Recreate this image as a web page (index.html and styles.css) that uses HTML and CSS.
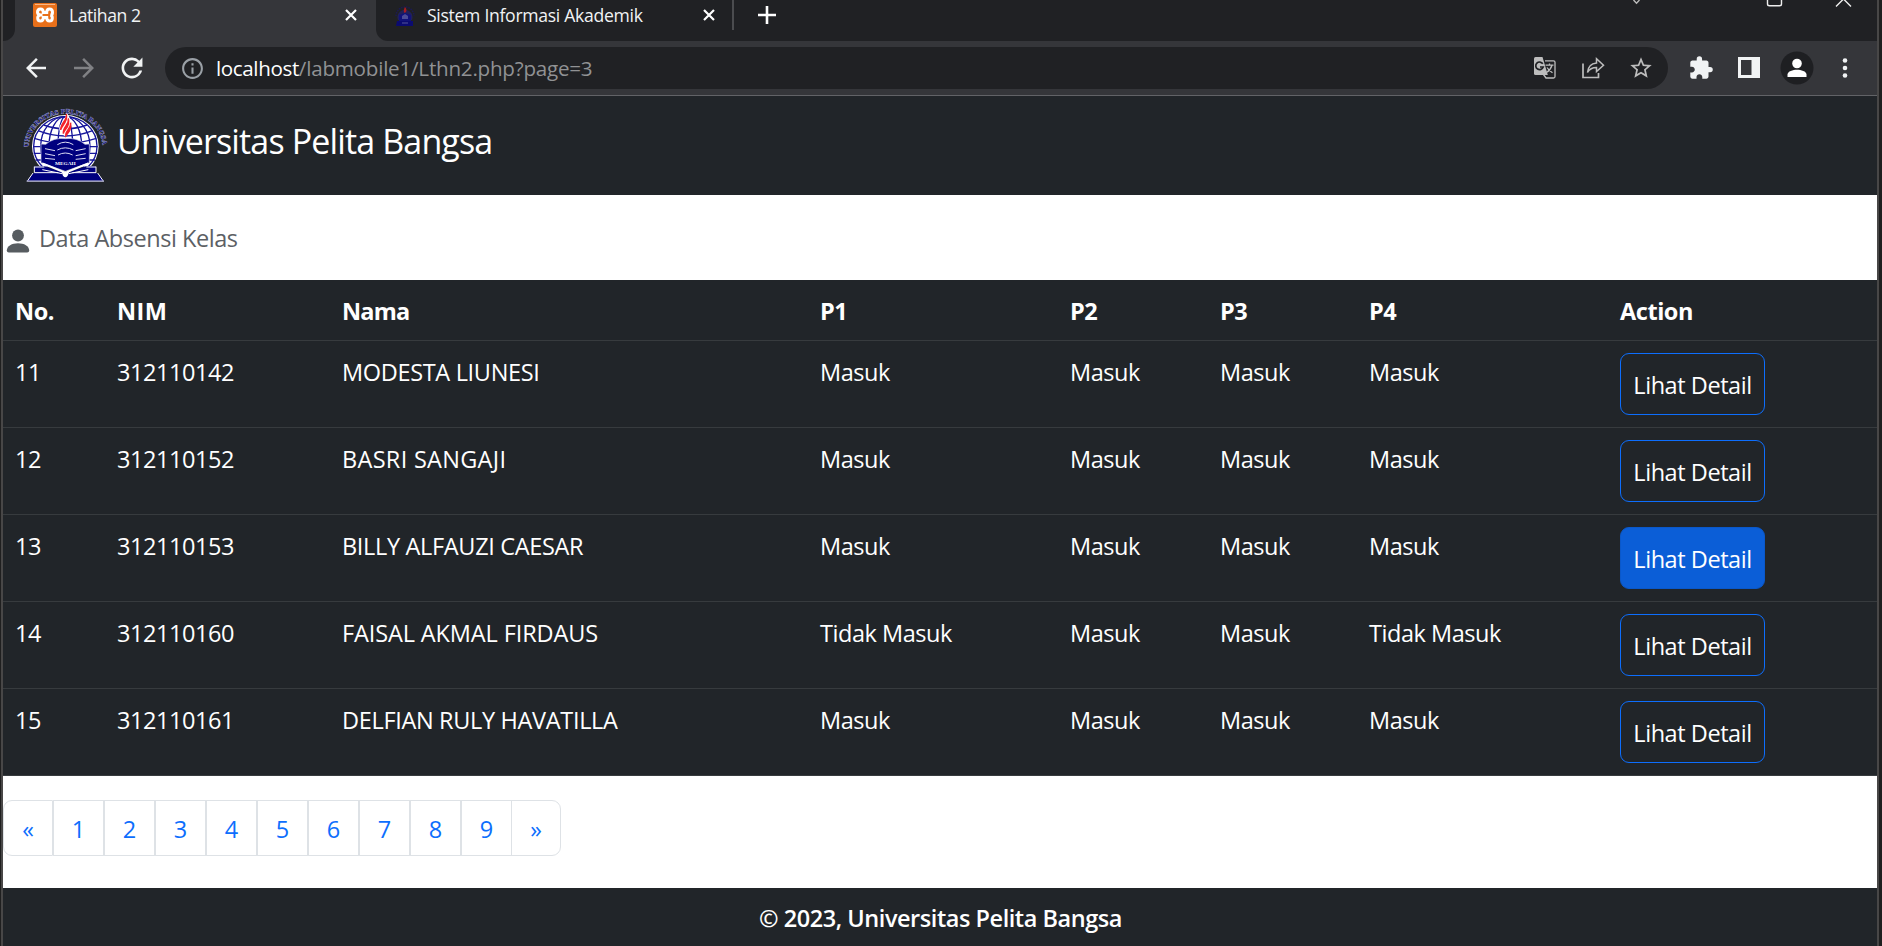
FILE: index.html
```
<!DOCTYPE html>
<html lang="id">
<head>
<meta charset="utf-8">
<title>Latihan 2</title>
<link rel="stylesheet" href="styles.css">
</head>
<body>
<div class="window">
  <div class="tabstrip">
    <div class="strip-left"></div>
    <div class="tab active">
      <svg class="fav" viewBox="0 0 24 24"><rect width="24" height="24" rx="2" fill="#e8701a"/><rect x="2" y="1" width="20" height="1" fill="#f8b684"/><path d="M9.500 12C5 12 4.500 10.500 4.500 9.200C4.500 7.200 5.800 6 7.500 6C9.500 6 10.300 7.500 10.300 9.500H13.700C13.700 7.500 14.500 6 16.500 6C18.200 6 19.500 7.200 19.500 9.200C19.500 10.500 19 12 17.500 12C19 12.500 19.300 13.500 19.300 15C19.300 16.700 18.200 18 16.500 18C14.800 18 13.700 16.700 13.700 14.500H10.300C10.300 16.700 9.200 18 7.500 18C5.800 18 4.700 16.700 4.700 15C4.700 13.500 5.500 12.500 7 12" fill="none" stroke="#fff" stroke-width="3"/></svg>
      <span class="tab-title">Latihan 2</span>
      <svg class="close" viewBox="0 0 12 12"><path d="M1 1L11 11M11 1L1 11"/></svg>
    </div>
    <div class="strip-right">
      <div class="tab second">
        <svg class="fav2" viewBox="0 0 20 22"><path d="M1 12A9 9 0 0 1 19 12" fill="none" stroke="#1b1a55" stroke-width="1.500" stroke-dasharray="1.500 1"/><path d="M3 16A7.500 7.500 0 1 1 17 16Z" fill="#20205a"/><path d="M4 11L10 9L16 11V17H4Z" fill="#12127a"/><path d="M7 12L10 10L13 12V15H7Z" fill="#4c4c98"/><path d="M2 17H18V22H1Z" fill="#0b0b70"/><path d="M7 19H13" stroke="#55559a"/><path d="M10 3C12 5 12 8 9.500 9C8 7 9 5 10 3Z" fill="#a51c22"/></svg>
        <span class="tab-title wide">Sistem Informasi Akademik</span>
        <svg class="close" viewBox="0 0 12 12"><path d="M1 1L11 11M11 1L1 11"/></svg>
      </div>
      <svg class="plus" viewBox="0 0 18 18"><path d="M9 0V18M0 9H18"/></svg>
      <svg class="controls" viewBox="0 0 220 8"><path d="M5.500 0L8.500 3.200L11.500 0" stroke="#bbb"/><path d="M139.500 0V4Q139.500 5.800 141.500 5.800H151.500Q153.500 5.800 153.500 4V0"/><path d="M208 6.500L215.500 -1L223 6.500" /></svg>
    </div>
  </div>
  <div class="toolbar">
    <svg class="ico light" viewBox="0 0 24 24"><path d="M20 11H7.830l5.590-5.590L12 4l-8 8 8 8 1.410-1.410L7.830 13H20v-2z"/></svg>
    <svg class="ico dim" viewBox="0 0 24 24"><path d="M12 4l-1.410 1.410L16.170 11H4v2h12.170l-5.580 5.590L12 20l8-8z"/></svg>
    <svg class="ico light" viewBox="0.500 0.500 23 23"><path d="M17.650 6.350A7.958 7.958 0 0 0 12 4c-4.420 0-7.990 3.580-7.990 8s3.570 8 7.990 8c3.730 0 6.840-2.550 7.730-6h-2.080A5.990 5.990 0 0 1 12 18c-3.310 0-6-2.690-6-6s2.690-6 6-6c1.660 0 3.140.690 4.220 1.780L13 11h7V4l-2.350 2.350z"/></svg>
    <div class="omnibox">
      <svg class="info" viewBox="0 0 24 24"><path d="M11 7h2v2h-2zm0 4h2v6h-2zm1-9C6.480 2 2 6.480 2 12s4.480 10 10 10 10-4.480 10-10S17.520 2 12 2zm0 18c-4.410 0-8-3.590-8-8s3.590-8 8-8 8 3.590 8 8-3.590 8-8 8z"/></svg>
      <span class="host">localhost</span><span class="path">/labmobile1/Lthn2.php?page=3</span>
      <div class="omni-icons">
        <svg class="ico grey" viewBox="0 0 30 30"><path d="M5.500 4H12.500L17.800 22H5.500Q4 22 4 20.500V5.500Q4 4 5.500 4Z"/><path d="M15 7.800H23.500Q25 7.800 25 9.300V23.500Q25 25 23.500 25H16L13.500 21.500" fill="none" stroke="#bdbdbd" stroke-width="1.300"/><path d="M12.800 10.800A3.800 3.800 0 1 0 13.200 14H10" fill="none" stroke="#202124" stroke-width="1.700"/><path d="M15.500 12.200H23.500M19.500 10.500V12.200M22 12.200Q20.500 17 16.500 19.500M17 14.500Q19 17.500 22.500 19.800" fill="none" stroke="#bdbdbd" stroke-width="1.300"/></svg>
        <svg class="ico grey" viewBox="0 0 30 30"><path d="M5 10.500V24.500H20.500V20" fill="none" stroke="#bdbdbd" stroke-width="1.700"/><path d="M9.500 19.500C10 13.500 13.500 10.500 18.500 10V5.800L25.500 12.300L18.500 18.500V14.500C14.500 14.500 11.500 16 9.500 19.500Z" fill="none" stroke="#bdbdbd" stroke-width="1.500"/></svg>
        <svg class="ico grey" viewBox="-2 -2 28 28"><path d="M22 9.240l-7.190-.62L12 2 9.190 8.630 2 9.240l5.460 4.730L5.820 21 12 17.270 18.180 21l-1.630-7.030L22 9.240zM12 15.400l-3.760 2.270 1-4.280-3.320-2.880 4.380-.38L12 6.100l1.710 4.040 4.380.38-3.320 2.880 1 4.280L12 15.400z"/></svg>
      </div>
    </div>
    <svg class="ico light" viewBox="-2 -2 28 28"><path d="M20.500 11H19V7c0-1.100-.9-2-2-2h-4V3.500a2.500 2.500 0 0 0-5 0V5H4c-1.100 0-1.990.9-1.990 2v3.800H3.500c1.490 0 2.700 1.210 2.700 2.700s-1.210 2.700-2.700 2.700H2V20c0 1.100.9 2 2 2h3.800v-1.500c0-1.490 1.210-2.700 2.700-2.700 1.490 0 2.700 1.210 2.700 2.700V22H17c1.100 0 2-.9 2-2v-4h1.500a2.500 2.500 0 0 0 0-5z"/></svg>
    <svg class="ico light" viewBox="0 0 30 30"><path fill-rule="evenodd" d="M4 4H26V25H4ZM7 7V22H17.500V7Z"/></svg>
    <svg class="avatar" viewBox="0 0 34 34"><circle cx="17" cy="17" r="16.500" fill="#1e1f22"/><circle cx="17" cy="12.500" r="4.800" fill="#fff"/><path d="M7.500 26V23.500C7.500 20.300 13 18.700 17 18.700S26.500 20.300 26.500 23.500V26Z" fill="#fff"/></svg>
    <svg class="ico light" viewBox="0 0 30 30"><circle cx="15" cy="7.500" r="2.300"/><circle cx="15" cy="15" r="2.300"/><circle cx="15" cy="22.500" r="2.300"/></svg>
  </div>

  <header class="navbar">
    <svg class="logo" viewBox="0 0 300 270">
      <defs><path id="arc" d="M41 141A111 100 0 0 1 263 141"/><clipPath id="globe"><path d="M50 200V40H252V200Z"/></clipPath></defs>
      <text class="logo-ring"><textPath href="#arc" textLength="325">UNIVERSITAS PELITA BANGSA</textPath></text>
      <g clip-path="url(#globe)">
        <ellipse cx="151" cy="139" rx="100" ry="94" fill="#fff"/>
        <g fill="none" stroke="#15159a" stroke-width="4">
          <ellipse cx="151" cy="139" rx="95" ry="89"/><ellipse cx="151" cy="139" rx="74" ry="89"/><ellipse cx="151" cy="139" rx="49" ry="89"/><ellipse cx="151" cy="139" rx="22" ry="89"/>
          <path d="M86 75Q151 98 216 75M69 92Q151 124 233 92M58 115Q151 145 244 115M54 140H98M204 140H248M56 160H98M204 160H246M62 180H98M204 180H240"/>
        </g>
      </g>
      <path d="M155 38C165 52 172 68 168 84C166 98 158 105 151 109C140 103 131 94 133 82C137 68 152 60 155 38Z" fill="#fff"/>
      <path d="M154 42C158 60 136 68 137 90C139 76 160 68 154 42ZM160 55C163 75 142 80 145 101C149 85 167 80 160 55ZM167 68C168 87 151 89 152 108C161 98 170 88 167 68Z" fill="#f2222c" stroke="#f2222c" stroke-width="4"/>
      <path d="M78 132L92 133Q116 112 151 116Q186 112 210 133L223 132V188L151 214L78 188Z" fill="#00007f" stroke="#d5d5ef" stroke-width="2"/>
      <path d="M127 134Q151 119 175 134M127 150Q151 137 175 150M129 165Q151 153 173 165M90 146L120 152M90 161L120 167M90 175L120 178M182 152L212 146M182 167L212 161M182 178L212 175" fill="none" stroke="#dcdcf4" stroke-width="3"/>
      <text class="logo-motto" x="120" y="195" textLength="62" lengthAdjust="spacingAndGlyphs">MEGAH</text>
      <path d="M58 199H88L151 220L214 199H243V220H248L267 244H35L54 220H58Z" fill="#00007f"/>
      <path d="M58 200V218H130M243 200V218H172M58 201H88M214 201H243M54 219L38 242M248 219L264 242" fill="none" stroke="#fff" stroke-width="3"/>
      <path d="M35 243.500H267" stroke="#c9c9de" stroke-width="4"/>
      <path d="M82 190L146 216M220 190L156 216" stroke="#fff" stroke-width="6"/><path d="M82 209L141 221M220 209L161 221" stroke="#fff" stroke-width="3"/>
      <path d="M139 214H163L158 227Q151 236 144 227Z" fill="#fff"/>
    </svg>
    <span class="brand">Universitas Pelita Bangsa</span>
  </header>

  <section class="heading">
    <svg class="person" viewBox="0 0 24 24"><circle cx="12" cy="6.500" r="5.900"/><path d="M0.800 21.500C0.800 17 6 14.200 12 14.200S23.200 17 23.200 21.500Q23.200 23.500 21.200 23.500H2.800Q0.800 23.500 0.800 21.500Z"/></svg>
    <span class="heading-text">Data Absensi Kelas</span>
  </section>

  <table class="table">
    <colgroup><col class="c-no"><col class="c-nim"><col class="c-nama"><col class="c-p1"><col class="c-p2"><col class="c-p3"><col class="c-p4"><col></colgroup>
    <thead><tr><th>No.</th><th class="nim">NIM</th><th class="nama">Nama</th><th>P1</th><th>P2</th><th>P3</th><th>P4</th><th>Action</th></tr></thead>
    <tbody>
      <tr><td>11</td><td>312110142</td><td class="tight">MODESTA LIUNESI</td><td>Masuk</td><td>Masuk</td><td>Masuk</td><td>Masuk</td><td><a class="btn">Lihat Detail</a></td></tr>
      <tr><td>12</td><td>312110152</td><td class="loose">BASRI SANGAJI</td><td>Masuk</td><td>Masuk</td><td>Masuk</td><td>Masuk</td><td><a class="btn">Lihat Detail</a></td></tr>
      <tr><td>13</td><td>312110153</td><td class="tight">BILLY ALFAUZI CAESAR</td><td>Masuk</td><td>Masuk</td><td>Masuk</td><td>Masuk</td><td><a class="btn hover">Lihat Detail</a></td></tr>
      <tr><td>14</td><td>312110160</td><td class="normal">FAISAL AKMAL FIRDAUS</td><td>Tidak Masuk</td><td>Masuk</td><td>Masuk</td><td>Tidak Masuk</td><td><a class="btn">Lihat Detail</a></td></tr>
      <tr><td>15</td><td>312110161</td><td class="tight">DELFIAN RULY HAVATILLA</td><td>Masuk</td><td>Masuk</td><td>Masuk</td><td>Masuk</td><td><a class="btn">Lihat Detail</a></td></tr>
    </tbody>
  </table>

  <nav class="pages"><a>«</a><a>1</a><a>2</a><a>3</a><a>4</a><a>5</a><a>6</a><a>7</a><a>8</a><a>9</a><a>»</a></nav>

  <footer class="footer">© 2023, Universitas Pelita Bangsa</footer>
</div>
</body>
</html>
```
FILE: styles.css
```
* { box-sizing: border-box; }
body {
  margin: 0;
  height: 946px;
  overflow: hidden;
  background: #1f1f1f;
  font: 23.5px/36px "Open Sans", "Noto Sans", sans-serif;
  letter-spacing: -0.45px;
}
svg { display: block; flex: none; }
.window {
  display: flex;
  flex-direction: column;
  width: 1878px;
  height: 946px;
  margin-left: 1px;
  border: solid #484747;
  border-width: 0 2px;
  background: #fff;
}

/* tab strip */
.tabstrip { display: flex; height: 41px; background: #35363a; font-size: 17.6px; line-height: 30px; color: #f1f3f4; }
.strip-left { width: 12px; background: #202124; border-bottom-right-radius: 12px; }
.strip-right { flex: 1; display: flex; background: #202124; border-bottom-left-radius: 12px; }
.tab { display: flex; align-items: center; height: 30px; }
.active { width: 361px; padding: 0 19px 0 18px; }
.fav { width: 24px; height: 24px; margin-right: 12px; }
.fav2 { width: 20px; height: 22px; margin-right: 12px; }
.tab-title { flex: 1; letter-spacing: -0.46px; white-space: nowrap; }
.tab-title.wide { letter-spacing: -0.3px; }
.second { width: 358px; padding: 0 17px 0 19px; border-right: 2px solid #4b4c4f; }
.close { width: 12px; height: 12px; stroke: #fff; stroke-width: 2.2; }
.plus { width: 18px; height: 18px; margin: 6px 0 0 24px; stroke: #fff; stroke-width: 2.6; }
.controls { width: 220px; height: 8px; margin: 0 29px 0 auto; fill: none; stroke: #eee; stroke-width: 1.4; overflow: visible; }

/* toolbar */
.toolbar {
  display: flex;
  align-items: center;
  gap: 18px;
  height: 55px;
  padding: 0 17px 0 18px;
  background: #35363a;
  border-bottom: 1px solid #626367;
}
.ico { width: 30px; height: 30px; }
.light { fill: #f1f3f4; }
.dim { fill: #808184; }
.grey { fill: #bdbdbd; }
.avatar { width: 34px; height: 34px; margin: 0 -2px; }
.omnibox {
  flex: 1;
  display: flex;
  align-items: center;
  height: 42px;
  padding: 0 12px 0 15px;
  border-radius: 21px;
  background: #202124;
  font-size: 20.6px;
  line-height: 40px;
}
.info { width: 25px; height: 25px; margin-right: 11px; fill: #9aa0a6; }
.host { color: #fff; letter-spacing: -0.38px; }
.path { color: #919294; letter-spacing: -0.22px; }
.omni-icons { display: flex; gap: 18px; margin-left: auto; }

/* page header */
.navbar { display: flex; height: 99px; padding: 4px 12px; background: #212529; color: #fff; }
.logo { width: 100px; height: 90px; }
.logo-ring { font: bold 20px "Liberation Serif", serif; letter-spacing: 0; fill: #20208a; stroke: #b9bbd4; stroke-width: 1.6; paint-order: stroke; }
.logo-motto { font: bold 12px "Liberation Serif", serif; letter-spacing: 0; fill: #fff; }
.brand { margin: 16px 0 0 2px; font-size: 34px; line-height: 50px; letter-spacing: -0.86px; }
.heading { display: flex; height: 85px; padding: 23px 0 0 3px; color: #5c6064; fill: #575c60; }
.person { width: 24px; height: 24px; margin: 11px 9px 0 0; }
.heading-text { padding-top: 2px; }

/* attendance table */
.table { width: 100%; border-collapse: separate; border-spacing: 0; table-layout: fixed; background: #212529; color: #fff; }
.c-no { width: 102px; }
.c-nim { width: 225px; }
.c-nama { width: 478px; }
.c-p1 { width: 250px; }
.c-p2 { width: 150px; }
.c-p3 { width: 149px; }
.c-p4 { width: 251px; }
th, td { padding: 13px 12px 11px; border-bottom: 1px solid #373b3e; text-align: left; vertical-align: top; white-space: nowrap; }
th { height: 61px; font-weight: 700; }
td { height: 87px; }
td:last-child { padding-top: 12px; }
.nim { letter-spacing: 0.4px; }
.nama { letter-spacing: -0.8px; }
.tight { letter-spacing: -0.33px; }
.normal { letter-spacing: -0.12px; }
.loose { letter-spacing: 0.3px; }
.btn { display: block; width: 145px; height: 62px; padding-top: 1px; border: 1px solid #0d6efd; border-radius: 9px; line-height: 60px; text-align: center; }
.hover { background: #0b5ed7; border-color: #0a58ca; }

/* pagination */
.pages { display: flex; height: 112px; padding-top: 24px; color: #0d6efd; }
.pages a { width: 51px; height: 56px; border: 1px solid #dee2e6; line-height: 56px; text-align: center; letter-spacing: 0; }
.pages a:first-child { width: 50px; border-radius: 9px 0 0 9px; }
.pages a:last-child { width: 50px; margin-left: -1px; border-radius: 0 9px 9px 0; }

.footer { flex: 1; padding: 12px 0 0 1px; background: #212529; color: #fff; font-weight: 600; text-align: center; }
```
